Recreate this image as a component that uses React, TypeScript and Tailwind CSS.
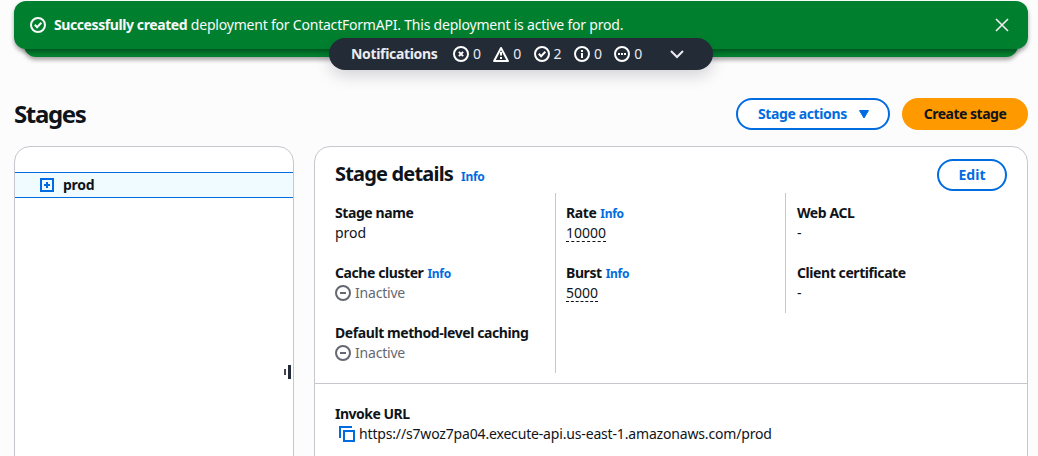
import type { ReactNode } from "react";

function StatusIcon({ kind }: { kind: "error" | "warning" | "success" | "info" | "pending" | "stopped" }) {
  return (
    <svg width="16" height="16" viewBox="0 0 16 16" fill="none" stroke="currentColor" strokeWidth="2" className="block shrink-0">
      {kind === "warning" ? (
        <path d="M8 2 14.9 15H1.1Z" strokeLinejoin="round" />
      ) : (
        <circle cx="8" cy="8" r="7" />
      )}
      {kind === "error" && <path d="m10.1 5.9-4.2 4.2M5.9 5.9l4.2 4.2" />}
      {kind === "warning" && <path d="M8 6v3.6M8 11v2" />}
      {kind === "success" && <path d="m4.8 7.8 2.3 2.4 4.2-4.4" />}
      {kind === "info" && <path d="M8 12V7M8 4v2" />}
      {kind === "pending" && <path d="M4 8h2M7 8h2M10 8h2" />}
      {kind === "stopped" && <path d="M5 8h6" />}
    </svg>
  );
}

function Info() {
  return <a className="text-[12px] font-bold tracking-[-0.3px] text-[#006ce0]">Info</a>;
}

function Field({ label, info, children }: { label: string; info?: boolean; children: ReactNode }) {
  return (
    <div>
      <div className="flex h-5 items-baseline gap-1 font-bold">
        <span className="tracking-[-0.42px]">{label}</span>
        {info && <Info />}
      </div>
      <div className="h-5">{children}</div>
    </div>
  );
}

function Inactive() {
  return (
    <span className="flex items-center gap-1 text-[#656871]">
      <StatusIcon kind="stopped" />
      <span className="tracking-[-0.2px]">Inactive</span>
    </span>
  );
}

const counts = [
  { kind: "error", count: 0 },
  { kind: "warning", count: 0 },
  { kind: "success", count: 2 },
  { kind: "info", count: 0 },
  { kind: "pending", count: 0 },
] as const;

export default function App() {
  return (
    <div className="h-[456px] w-[1038px] overflow-hidden bg-[#fcfcfd] pl-[14px] pr-[10px] pt-px font-['Noto_Sans',sans-serif] text-[14px] leading-5 text-[#0f141a]">
      <div className="relative h-14">
        <div className="absolute inset-x-[10px] top-2 h-12 rounded-xl bg-[#00802f] shadow-[0_3px_4px_rgba(0,0,0,0.35)]" />
        <div className="relative flex h-12 items-center rounded-xl bg-[#00802f] pl-4 pr-[19px] text-[#f9f9fa] shadow-[0_3px_4px_rgba(0,0,0,0.35)]">
          <StatusIcon kind="success" />
          <p className="ml-2 flex-1 whitespace-nowrap">
            <b className="tracking-[-0.41px]">Successfully created</b>{" "}
            <span className="tracking-[-0.21px]">deployment for ContactFormAPI. This deployment is active for prod.</span>
          </p>
          <svg width="14" height="14" viewBox="0 0 14 14" fill="none" stroke="#ebebf0" strokeWidth="1.7" className="block">
            <path d="m1 1 12 12M13 1 1 13" />
          </svg>
        </div>
        <div className="absolute left-[315px] top-[37px] flex h-8 w-96 items-center rounded-full bg-[#232b37] pl-[22px] text-[#ebebf0] shadow-[0_6px_16px_rgba(0,7,22,0.16)]">
          <b className="w-[102px] tracking-[-0.33px]">Notifications</b>
          {counts.map(({ kind, count }) => (
            <span key={kind} className="flex w-[40.3px] items-center gap-1">
              <span className="text-white"><StatusIcon kind={kind} /></span>
              {count}
            </span>
          ))}
          <svg width="14" height="10" viewBox="0 0 14 10" fill="none" stroke="currentColor" strokeWidth="2" className="ml-[16px] block">
            <path d="m1 2 6 6 6-6" />
          </svg>
        </div>
      </div>

      <div className="mt-[41px] flex h-8 items-center">
        <h1 className="flex-1 text-[24px] font-bold leading-8 tracking-[-1.35px]">Stages</h1>
        <button className="mr-3 flex h-8 w-[154px] items-center rounded-full border-2 border-[#006ce0] bg-white pl-5 font-bold text-[#006ce0]">
          <span className="w-[100px] text-left tracking-[-0.38px]">Stage actions</span>
          <svg width="12" height="9" viewBox="0 0 12 9" className="block">
            <path d="M1.5.5h9L6 8Z" fill="currentColor" stroke="currentColor" strokeLinejoin="round" />
          </svg>
        </button>
        <button className="h-8 w-[126px] rounded-full bg-[#ff9900] font-bold tracking-[-0.48px]">Create stage</button>
      </div>

      <div className="mt-4 flex h-[330px] gap-5">
        <aside className="relative w-[280px] rounded-2xl border border-[#c6c6cd] bg-white pt-[25px]">
          <div className="flex h-[26px] items-center border-y border-[#006ce0] bg-[#f0fbff] pl-[25px] font-bold">
            <svg width="14" height="14" viewBox="0 0 14 14" fill="none" stroke="#006ce0" strokeWidth="2" className="mr-[9px] block">
              <path d="M1 1h12v12H1ZM4 7h6M7 4v6" />
            </svg>
            <span className="tracking-[-0.3px]">prod</span>
          </div>
          <div className="absolute right-[2px] top-[218px] flex items-center gap-[2px]">
            <span className="h-[6px] w-[2px] bg-[#424650]" />
            <span className="h-[14px] w-[3px] bg-[#232b37]" />
          </div>
        </aside>

        <main className="w-[714px] rounded-2xl border border-[#c6c6cd] bg-white">
          <div className="flex h-[46px] items-end px-5 pt-3">
            <div className="flex flex-1 items-baseline gap-2 pb-[6px]">
              <h2 className="text-[20px] font-bold leading-6 tracking-[-0.82px]">Stage details</h2>
              <Info />
            </div>
            <button className="mb-[2px] h-8 w-[70px] rounded-full border-2 border-[#006ce0] font-bold text-[#006ce0]">Edit</button>
          </div>
          <div className="flex items-start pl-5">
            <section className="flex w-[221px] flex-col gap-5 border-r border-[#c6c6cd] py-[10px]">
              <Field label="Stage name">prod</Field>
              <Field label="Cache cluster" info><Inactive /></Field>
              <Field label="Default method-level caching"><Inactive /></Field>
            </section>
            <section className="flex w-[230px] flex-col gap-5 border-r border-[#c6c6cd] py-[10px] pl-[10px]">
              <Field label="Rate" info>
                <span className="inline-block h-[19px] border-b border-dashed border-[#0f141a]">10000</span>
              </Field>
              <Field label="Burst" info>
                <span className="inline-block h-[19px] border-b border-dashed border-[#0f141a]">5000</span>
              </Field>
            </section>
            <section className="flex flex-col gap-5 py-[10px] pl-[11px]">
              <Field label="Web ACL">-</Field>
              <Field label="Client certificate">-</Field>
            </section>
          </div>
          <div className="mt-[10px] border-t border-[#c6c6cd] px-5 pt-5">
            <div className="h-5 font-bold tracking-[-0.5px]">Invoke URL</div>
            <div className="flex h-5 items-center pl-1">
              <svg width="16" height="16" viewBox="0 0 16 16" fill="none" stroke="#006ce0" strokeWidth="2" className="mr-1 block">
                <path d="M5 5h10v10H5ZM1 12V1h12" />
              </svg>
              <span className="tracking-[-0.165px]">https://s7woz7pa04.execute-api.us-east-1.amazonaws.com/prod</span>
            </div>
          </div>
        </main>
      </div>
    </div>
  );
}
